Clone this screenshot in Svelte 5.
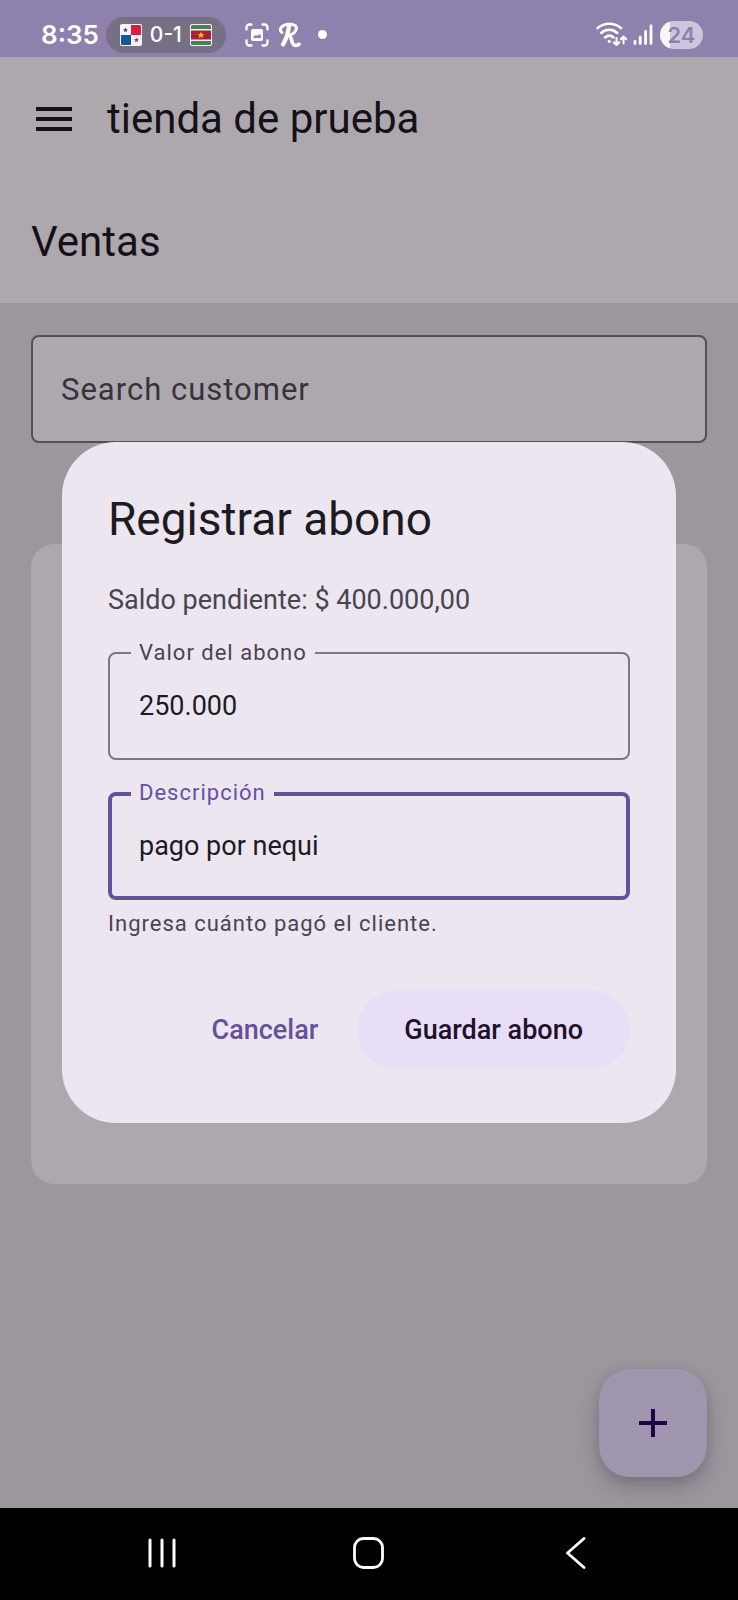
<script>
  let query = $state('');
  let amount = $state('250.000');
  let description = $state('pago por nequi');
</script>

<div class="screen">
  <div class="status">
    <div class="status-left">
      <span class="clock">8:35</span>
      <span class="score">
        <svg width="22" height="22" viewBox="0 0 22 22" aria-hidden="true">
          <rect width="22" height="22" rx="2" fill="#f7f4f8" />
          <path d="M11 1h8.500a1.500 1.500 0 0 1 1.500 1.500V11H11z" fill="#d5203f" />
          <path d="M1 11h10v10H2.500A1.500 1.500 0 0 1 1 19.500z" fill="#10579c" />
          <path d="M5.500 3.700l.7 1.500 1.600.2-1.200 1.100.3 1.600-1.400-.8-1.400.8.300-1.600-1.200-1.100 1.600-.2z" fill="#27415f" />
          <path d="M16.500 13.500l.7 1.600 1.700.2-1.300 1.100.4 1.700-1.500-.9-1.500.9.400-1.700-1.300-1.100 1.700-.2z" fill="#c22840" />
        </svg>
        <span>0-1</span>
        <svg width="22" height="22" viewBox="0 0 22 22" aria-hidden="true">
          <rect width="22" height="22" rx="2" fill="#f2eff2" />
          <path d="M1 5V2.500A1.500 1.500 0 0 1 2.500 1h17A1.500 1.500 0 0 1 21 2.500V5z" fill="#468053" />
          <path d="M1 17v2.500A1.500 1.500 0 0 0 2.500 21h17a1.500 1.500 0 0 0 1.500-1.500V17z" fill="#468053" />
          <rect x="1" y="6.500" width="20" height="9" fill="#ac1d3e" />
          <path d="M11 7.600l1 2.300 2.500.2-1.900 1.600.6 2.500-2.200-1.400-2.200 1.400.6-2.500-1.900-1.600 2.500-.2z" fill="#f6b42c" />
        </svg>
      </span>
      <svg class="capture" width="24" height="24" viewBox="0 0 24 24" fill="none" stroke="#fff" stroke-width="2.300" stroke-linecap="round" aria-hidden="true">
        <path d="M1.500 6.500V4.500a3 3 0 0 1 3-3h2M17.500 1.500h2a3 3 0 0 1 3 3v2M22.500 17.500v2a3 3 0 0 1-3 3h-2M6.500 22.500h-2a3 3 0 0 1-3-3v-2" />
        <path fill="#fff" stroke="none" fill-rule="evenodd" d="M8 6h8a2 2 0 0 1 2 2v8a2 2 0 0 1-2 2H8a2 2 0 0 1-2-2V8a2 2 0 0 1 2-2zM8.500 15h7.500v-2.500c-1.500-2-3-.9-3.800.3-1-1-2.500-.4-3.700.7z" />
      </svg>
      <svg class="brand" width="23" height="26" viewBox="0 0 23 26" fill="none" stroke="#fff" stroke-linecap="round" stroke-linejoin="round" aria-hidden="true">
        <path stroke-width="3" d="M4 10.500C.5 8.500 2.500 3 10.500 2.200c6.500-.5 9 2.300 7.500 5.800-1.300 3.200-4.500 5-8.500 5.200" />
        <path stroke-width="4.200" d="M11 4C10.500 9 8.500 16.500 5 22.500" />
        <path stroke-width="3.600" d="M10.800 13.500c3.500 1 2.200 8.300 5.400 9.600 1.800.7 3.400.2 4.800-1" />
      </svg>
      <span class="dot"></span>
    </div>
    <div class="status-right">
      <svg width="32" height="25" viewBox="0 0 32 25" fill="none" stroke="#fff" stroke-width="2.500" stroke-linecap="round" aria-hidden="true">
        <path d="M1.500 6.200c6.500-6 17-6 23.500 0M5.200 11c4.500-4.200 11.600-4.200 16 0M9 15.500c2.600-2.300 6-2.300 8.500 0" />
        <circle cx="13.200" cy="19.300" r="1.600" fill="#fff" stroke="none" />
        <path stroke-width="2" stroke-linejoin="round" d="M20.500 16v6.500M17.700 20.200l2.800 2.800 2.800-2.800M27.500 21.500V15M24.800 17.300l2.700-2.800 2.700 2.800" />
      </svg>
      <svg width="20" height="22" viewBox="0 0 20 22" stroke="#fff" stroke-width="2.800" stroke-linecap="round" aria-hidden="true">
        <path d="M2 17.500v2M7.200 13v6.500M12.600 7.500v12M18 2v17.500" />
      </svg>
      <span class="battery">24</span>
    </div>
  </div>

  <header>
    <div class="bar">
      <button class="menu" aria-label="Menu">
        <svg width="36" height="24" viewBox="0 0 36 24" fill="#161118" aria-hidden="true">
          <path d="M0 0h36v4H0zM0 10h36v4H0zM0 20h36v4H0z" />
        </svg>
      </button>
      <h1>tienda de prueba</h1>
    </div>
    <div class="bar"><h2>Ventas</h2></div>
  </header>

  <main>
    <input class="search" type="text" aria-label="Search customer" placeholder="Search customer" bind:value={query} />
    <section class="card"></section>
    <button class="fab" aria-label="+">
      <svg width="28" height="28" viewBox="0 0 28 28" fill="#1c0546" aria-hidden="true">
        <path d="M12 0h4v12h12v4H16v12h-4V16H0v-4h12z" />
      </svg>
    </button>
  </main>

  <nav>
    <button aria-label="Recents">
      <svg width="32" height="32" viewBox="0 0 32 32" stroke="#fff" stroke-width="3" stroke-linecap="round" aria-hidden="true">
        <path d="M4 3v26M16 3v26M28 3v26" />
      </svg>
    </button>
    <button aria-label="Home">
      <svg width="32" height="32" viewBox="0 0 32 32" fill="none" stroke="#fff" stroke-width="2.800" aria-hidden="true">
        <rect x="1.500" y="1.500" width="28" height="29" rx="9" />
      </svg>
    </button>
    <button aria-label="Back">
      <svg width="32" height="32" viewBox="0 0 32 32" fill="none" stroke="#fff" stroke-width="2.800" stroke-linecap="round" stroke-linejoin="round" aria-hidden="true">
        <path d="M24 1.500L7.500 16 24 30.500" />
      </svg>
    </button>
  </nav>

  <div class="overlay">
    <div class="dialog" role="dialog" aria-labelledby="dialog-title">
      <h3 id="dialog-title">Registrar abono</h3>
      <p class="balance">Saldo pendiente: $ 400.000,00</p>
      <div class="field">
        <label for="amount">Valor del abono</label>
        <input id="amount" type="text" bind:value={amount} />
      </div>
      <div class="field active">
        <label for="description">Descripción</label>
        <input id="description" type="text" bind:value={description} />
      </div>
      <p class="hint">Ingresa cuánto pagó el cliente.</p>
      <div class="actions">
        <button class="text">Cancelar</button>
        <button class="tonal">Guardar abono</button>
      </div>
    </div>
  </div>
</div>

<style>
  :global(body) {
    margin: 0;
  }
  * {
    box-sizing: border-box;
  }
  svg {
    display: block;
    flex: none;
  }
  h1, h2, h3, p {
    margin: 0;
    font-weight: 400;
  }
  button {
    margin: 0;
    padding: 0;
    border: 0;
    background: none;
    font: inherit;
    cursor: pointer;
  }
  .screen {
    position: relative;
    display: flex;
    flex-direction: column;
    min-height: 100vh;
    background: #9c969d;
    font-family: Roboto, sans-serif;
  }
  .status {
    display: flex;
    justify-content: space-between;
    height: 57px;
    padding: 12px 35px 0 41px;
    background: #8f81ad;
    color: #fff;
    font-family: Inter, sans-serif;
  }
  .status-left,
  .status-right {
    display: flex;
    align-items: center;
  }
  .status-right {
    gap: 5px;
  }
  .clock {
    font-size: 26px;
    font-weight: 600;
  }
  .score {
    display: flex;
    align-items: center;
    gap: 8px;
    height: 36px;
    margin-left: 7px;
    padding: 0 14px;
    border-radius: 18px;
    background: #777084;
    font-size: 21px;
    font-weight: 500;
  }
  .capture {
    margin-left: 19px;
  }
  .brand {
    margin-left: 9px;
  }
  .dot {
    width: 9px;
    height: 9px;
    margin-left: 17px;
    border-radius: 50%;
    background: #fff;
  }
  .battery {
    width: 43px;
    height: 28px;
    margin-left: 2px;
    border-radius: 14px;
    background: linear-gradient(90deg, #f8f5fb 10px, #cec6dc 10px);
    color: #8f81ad;
    font-size: 22px;
    font-weight: 600;
    line-height: 28px;
    text-align: center;
  }
  header {
    background: #ada8ad;
    color: #161118;
  }
  .bar {
    display: flex;
    align-items: center;
    height: 123px;
    padding: 0 31px;
  }
  .menu {
    margin: 0 35px 0 5px;
  }
  h1, h2 {
    font-size: 42px;
    line-height: 54px;
  }
  main {
    position: relative;
    display: flex;
    flex: 1;
    flex-direction: column;
    padding: 32px 31px;
  }
  .search {
    width: 100%;
    height: 108px;
    padding: 0 28px;
    border: 2px solid #564f59;
    border-radius: 8px;
    outline: 0;
    background: #ada8ad;
    color: #161118;
    font-family: inherit;
    font-size: 31px;
    letter-spacing: 1px;
  }
  .search::placeholder {
    color: #37323b;
    opacity: 1;
  }
  .card {
    height: 640px;
    margin-top: 101px;
    border-radius: 23px;
    background: #ada8ad;
  }
  .fab {
    position: absolute;
    right: 31px;
    bottom: 31px;
    display: grid;
    place-items: center;
    width: 108px;
    height: 108px;
    border-radius: 31px;
    background: #9f95ae;
    box-shadow: 0 10px 20px rgba(70, 66, 75, 0.35), 0 2px 10px rgba(70, 66, 75, 0.15);
  }
  nav {
    position: relative;
    display: grid;
    grid-template-columns: repeat(3, 1fr);
    height: 92px;
    padding: 0 58px 2px;
    background: #000;
  }
  nav button {
    display: grid;
    place-items: center;
  }
  .overlay {
    position: absolute;
    inset: 57px 0 92px;
    display: grid;
    align-items: center;
    padding: 0 62px;
  }
  .dialog {
    display: flex;
    flex-direction: column;
    padding: 46px;
    border-radius: 54px;
    background: #ece6f0;
    color: #1d1b20;
  }
  h3 {
    margin-bottom: 31px;
    font-size: 46px;
    line-height: 62px;
  }
  .balance {
    color: #49454f;
    font-size: 27px;
    line-height: 39px;
  }
  .field {
    position: relative;
    margin-top: 32px;
  }
  .field label {
    position: absolute;
    top: -15px;
    left: 23px;
    padding: 0 8px;
    background: #ece6f0;
    color: #49454f;
    font-size: 22px;
    line-height: 31px;
    letter-spacing: 1px;
  }
  .field input {
    display: block;
    width: 100%;
    height: 108px;
    padding: 0 29px;
    border: 2px solid #7d7783;
    border-radius: 8px;
    outline: 0;
    background: transparent;
    color: #1d1b20;
    font-family: inherit;
    font-size: 27px;
  }
  .active label {
    color: #6650a4;
  }
  .active input {
    padding: 0 27px;
    border: 4px solid #65519b;
  }
  .hint {
    margin-top: 8px;
    color: #49454f;
    font-size: 22px;
    line-height: 31px;
    letter-spacing: 1px;
  }
  .actions {
    display: flex;
    justify-content: flex-end;
    gap: 16px;
    margin: 52px 0 8px;
    font-size: 27px;
    font-weight: 500;
  }
  .actions button {
    height: 78px;
    border-radius: 39px;
  }
  .text {
    padding: 0 23px;
    color: #65519b;
  }
  .tonal {
    padding: 0 47px;
    background: #e8def8;
    color: #1d1229;
  }
</style>
